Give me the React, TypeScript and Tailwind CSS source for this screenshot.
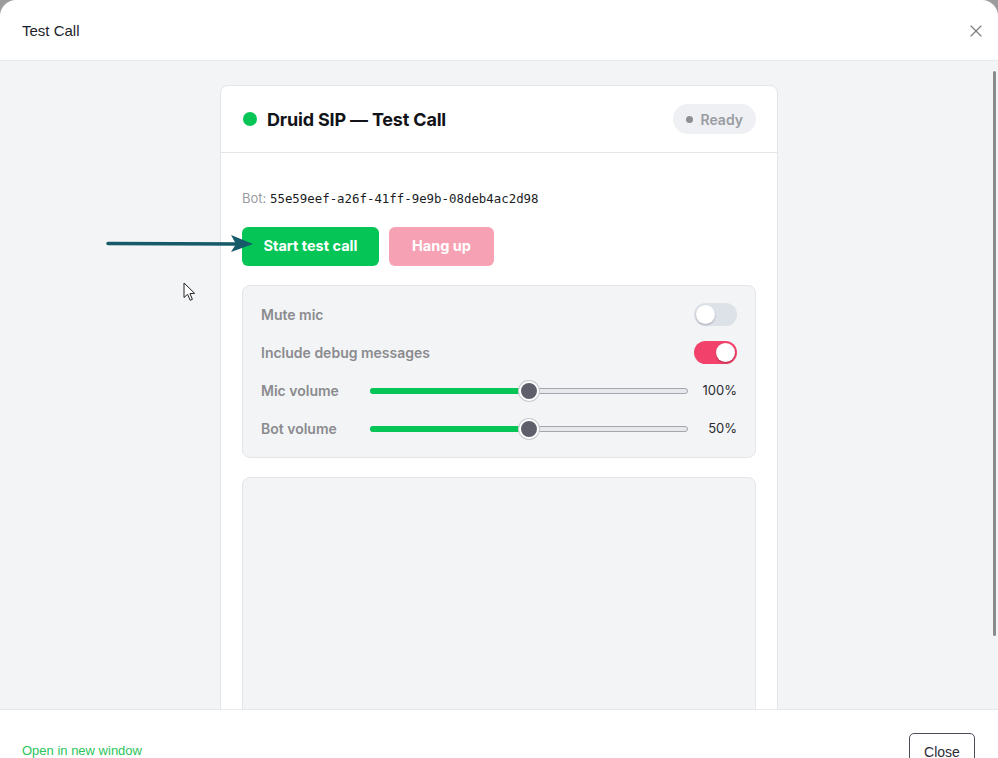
import { X } from "lucide-react";

const sans = "font-['Inter','Noto_Sans',sans-serif]";
const plain = "font-['Liberation_Sans','Roboto',sans-serif]";

function Toggle({ on }: { on: boolean }) {
  return (
    <span
      className={`flex h-[23px] w-[43px] items-center rounded-full px-[2px] ${
        on ? "justify-end bg-[#f2426b]" : "justify-start bg-[#dde1e8]"
      }`}
    >
      <span className="h-[19px] w-[19px] rounded-full bg-white shadow-[0_1px_2px_rgba(0,0,0,0.25)]" />
    </span>
  );
}

function Slider({ value }: { value: number }) {
  return (
    <div className="relative h-[20px] flex-1">
      <div className="absolute inset-x-0 top-[7px] h-[6px] rounded-full border border-[#a4a5ad] bg-[#e7e8ec]" />
      <div className="absolute left-0 top-[7px] h-[6px] rounded-full bg-[#05c557]" style={{ width: `${value}%` }} />
      <div
        className="absolute top-0 h-[20px] w-[20px] -translate-x-1/2 rounded-full border-2 border-white bg-[#5e5f6b] shadow-[0_0_0_1px_#c9cad0]"
        style={{ left: `${value}%` }}
      />
    </div>
  );
}

function Row({ label, children }: { label: string; children: React.ReactNode }) {
  return (
    <div className="flex h-[38px] items-center">
      <span className="w-[109px] shrink-0 text-[14px] font-semibold text-[#8b8b8f]">{label}</span>
      {children}
    </div>
  );
}

export default function App() {
  return (
    <div className="relative h-[758px] w-[998px] overflow-hidden bg-[#9c9c9c]">
      <div className="flex h-full flex-col rounded-t-[16px] bg-white">
        {/* dialog header */}
        <header className="flex h-[61px] shrink-0 items-center justify-between border-b border-[#e8e9ec] pl-[22px] pr-[12px] pt-[2px]">
          <h1 className={`${plain} text-[15px] text-[#1c1e2b]`}>Test Call</h1>
          <X className="h-[20px] w-[20px] text-[#7b7b7b]" strokeWidth={1.4} />
        </header>

        {/* body */}
        <div className={`${sans} relative h-[648px] shrink-0 overflow-hidden bg-[#f3f4f6] pt-[24px]`}>
          <div className="mx-auto w-[558px] rounded-[8px] border border-[#e3e5e9] bg-white">
            <div className="flex h-[67px] items-center justify-between border-b border-[#e3e5e9] pl-[22px] pr-[21px]">
              <div className="flex items-center gap-[10px]">
                <span className="h-[14px] w-[14px] rounded-full bg-[#05c557]" />
                <span className="text-[18px] font-bold tracking-[-0.01em] text-[#111318]">Druid SIP — Test Call</span>
              </div>
              <span className="flex h-[30px] items-center gap-[8px] rounded-full bg-[#eef0f3] pl-[13px] pr-[13px] text-[14px] font-semibold text-[#9a9ca3]">
                <span className="h-[7px] w-[7px] rounded-full bg-[#8d8f95]" />
                Ready
              </span>
            </div>

            <div className="px-[21px] pt-[36px]">
              <p className="text-[13px] text-[#9a9ca3]">
                Bot:{" "}
                <span className="font-['DejaVu_Sans_Mono',monospace] text-[12.4px] text-[#1b1d24]">
                  55e59eef-a26f-41ff-9e9b-08deb4ac2d98
                </span>
              </p>

              <div className="mt-[18px] flex gap-[10px]">
                <button className="h-[39px] w-[137px] rounded-[6px] bg-[#05c557] text-[14.5px] font-bold text-white">
                  Start test call
                </button>
                <button className="h-[39px] w-[105px] rounded-[6px] bg-[#f6a2b4] text-[14.5px] font-bold text-white">
                  Hang up
                </button>
              </div>

              <div className="mt-[19px] rounded-[8px] border border-[#e3e5e9] bg-[#f3f4f6] px-[18px] pb-[9px] pt-[10px]">
                <div className="flex h-[38px] items-center justify-between">
                  <span className="text-[14px] font-semibold text-[#8b8b8f]">Mute mic</span>
                  <Toggle on={false} />
                </div>
                <div className="flex h-[38px] items-center justify-between">
                  <span className="text-[14px] font-semibold text-[#8b8b8f]">Include debug messages</span>
                  <Toggle on />
                </div>
                <Row label="Mic volume">
                  <Slider value={50} />
                  <span className="w-[49px] shrink-0 text-right text-[13px] text-[#2a2c33]">100%</span>
                </Row>
                <Row label="Bot volume">
                  <Slider value={50} />
                  <span className="w-[49px] shrink-0 text-right text-[13px] text-[#2a2c33]">50%</span>
                </Row>
              </div>

              {/* transcript log */}
              <div className="mt-[19px] h-[300px] rounded-[8px] border border-[#e3e5e9] bg-[#f3f4f6]" />
            </div>
          </div>

          <div className="absolute right-[2px] top-[10px] h-[565px] w-[3px] rounded-full bg-[#8b8b8b]" />
        </div>

        {/* footer */}
        <footer className={`${plain} flex h-[90px] shrink-0 items-start justify-between border-t border-[#e8e9ec] pl-[22px] pr-[23px] pt-[23px]`}>
          <a className="mt-[10px] text-[13px] leading-[15px] text-[#2bc45a]">Open in new window</a>
          <button className="h-[38px] w-[66px] rounded-[5px] border border-[#4b4f5c] text-[14px] text-[#2a2c33]">
            Close
          </button>
        </footer>
      </div>

      {/* annotation arrow and pointer */}
      <svg className="absolute left-[104px] top-[232px]" width="150" height="24" viewBox="0 0 150 24">
        <path d="M4 11.5 L136 12" stroke="#145a68" strokeWidth="3.5" strokeLinecap="round" fill="none" />
        <path d="M127 3 L149 12 L127 20 L132 12 Z" fill="#145a68" />
      </svg>
      <svg className="absolute left-[183px] top-[282px]" width="14" height="20" viewBox="0 0 14 20">
        <path
          d="M1 1 L1 15.5 L4.6 12.3 L7.2 18.3 L9.4 17.3 L6.9 11.6 L11.6 11.3 Z"
          fill="#ffffff"
          stroke="#222"
          strokeWidth="1"
          strokeLinejoin="round"
        />
      </svg>
    </div>
  );
}
